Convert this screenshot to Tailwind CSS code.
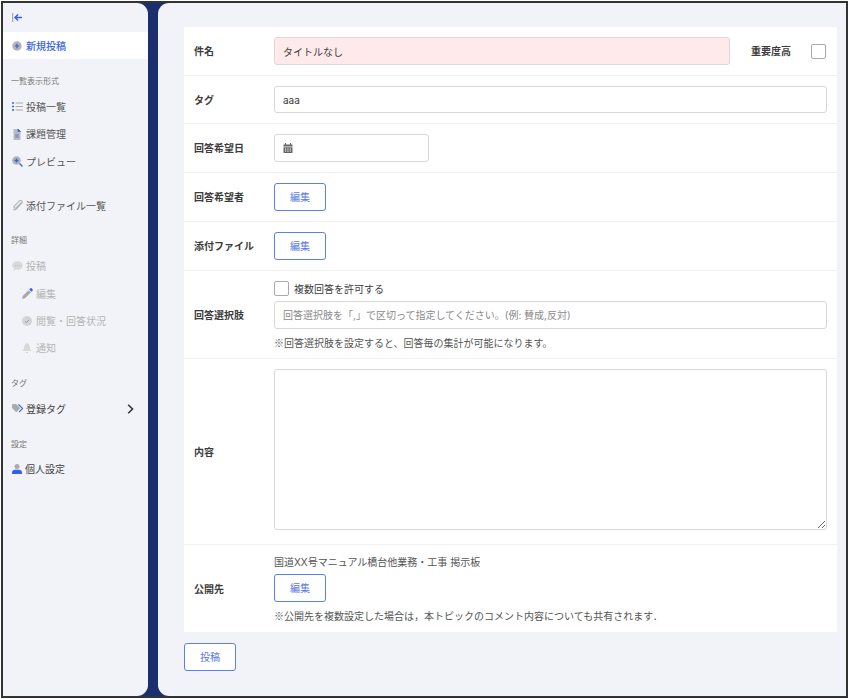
<!DOCTYPE html>
<html lang="ja">
<head>
  <meta charset="UTF-8" />
  <title>新規投稿</title>
  <script src="https://cdn.jsdelivr.net/npm/@tailwindcss/browser@4"></script>
</head>
<body class="bg-white font-['Inter','Noto_Sans_CJK_JP',sans-serif] text-[10px] leading-none text-[#3c3c3c]">
  <div class="w-[847px] h-[697px] m-px border-2 border-[#333] bg-[#1b2f6e] flex overflow-hidden">

    <!-- sidebar -->
    <aside class="w-[145px] h-full bg-[#f2f3f8] rounded-r-[11px] flex flex-col text-[#555]">
      <div class="h-[29px] pl-[9px] flex items-center">
        <svg width="11" height="9" viewBox="0 0 11 9" fill="none"><path d="M.7 0v9" stroke="#999" stroke-width="1"/><path d="M10 4.500H3.500M6 1.500 3 4.500l3 3" stroke="#2f62e8" stroke-width="1.500"/></svg>
      </div>
      <a class="h-[27px] bg-white flex items-center gap-[4px] pl-[9px] text-[#3a63e0] font-medium">
        <svg width="10" height="10" viewBox="0 0 11 11"><circle cx="5.500" cy="5.500" r="5.200" fill="#b4b4b4"/><path d="M5.500 3v5M3 5.500h5" stroke="#2f62e8" stroke-width="1.300"/></svg>
        新規投稿
      </a>

      <div class="mt-[16px] h-[12px] pl-[8px] flex items-center text-[8px] text-[#777]">一覧表示形式</div>
      <a class="mt-[6px] h-[27.500px] flex items-center gap-[3px] pl-[9px]">
        <svg width="11" height="9" viewBox="0 0 11 9"><path d="M0 1h2M0 4.500h2M0 8h2" stroke="#2f62e8" stroke-width="1.400"/><path d="M3.500 1H11M3.500 4.500H11M3.500 8H11" stroke="#aaa" stroke-width="1"/></svg>
        投稿一覧
      </a>
      <a class="h-[27.500px] flex items-center gap-[4px] pl-[9px]">
        <svg width="10" height="11" viewBox="1 0 9 11"><path d="M2 0h4.500L9 2.500V10.500a.5.500 0 0 1-.5.500h-6a.5.500 0 0 1-.5-.5z" fill="#bbb"/><path d="M6.500 0 9 2.500H6.500zM3.800 6h3.400M3.800 8h3.400" fill="#2f62e8" stroke="#2f62e8" stroke-width=".8"/></svg>
        課題管理
      </a>
      <a class="h-[27.500px] flex items-center gap-[3px] pl-[9px]">
        <svg width="11" height="11" viewBox="0 0 11 11"><circle cx="4.500" cy="4.500" r="4.300" fill="#b4b4b4"/><path d="M4.500 2.500v4M2.500 4.500h4M7.500 7.500 10.500 10.500" stroke="#2f62e8" stroke-width="1.300"/></svg>
        プレビュー
      </a>
      <a class="mt-[16px] h-[28px] flex items-center gap-[3px] pl-[9px]">
        <svg width="11" height="11" viewBox="0 0 11 11" fill="none"><path d="M9.500 2.300 4.300 7.600c-.7.700-1.500.7-2 .2s-.5-1.300.2-2L7 1.300c1.200-1.100 2.300-.9 2.800-.4s.6 1.500-.3 2.500L4.800 8.700c-1.500 1.500-3 1.500-3.700.7" stroke="#b4b4b4" stroke-width="1.100"/></svg>
        添付ファイル一覧
      </a>

      <div class="mt-[14.500px] h-[12px] pl-[8px] flex items-center text-[8px] text-[#777]">詳細</div>
      <a class="mt-[5.500px] h-[28px] flex items-center gap-[3px] pl-[9px] text-[#b5b5b5]">
        <svg width="11" height="10" viewBox="0 0 11 10"><ellipse cx="5.500" cy="4.500" rx="5.300" ry="4.200" fill="#d9d9d9"/><path d="M2 8 1 10l3-1.200z" fill="#d9d9d9"/><path d="M3 4.500h1M5 4.500h1M7 4.500h1" stroke="#a9bdf0" stroke-width="1"/></svg>
        投稿
      </a>
      <a class="h-[28px] flex items-center gap-[3px] pl-[19px] text-[#b5b5b5]">
        <svg width="11" height="11" viewBox="0 0 11 11"><path d="M0 11l.7-3L6.500 2.200 8.800 4.500 3 10.300z" fill="#a8a8a8"/><path d="M7.200 1.500 8.400.3c.3-.3.700-.3 1 0l1.300 1.300c.3.300.3.700 0 1L9.500 3.800z" fill="#2f62e8"/></svg>
        編集
      </a>
      <a class="h-[27.500px] flex items-center gap-[4px] pl-[19px] text-[#b5b5b5]">
        <svg width="10" height="10" viewBox="0 0 10 10" fill="none"><circle cx="5" cy="5" r="5" fill="#d4d4d4"/><path d="M3 5.200 4.500 6.600 7 3.800" stroke="#7f9ded" stroke-width="1"/></svg>
        閲覧・回答状況
      </a>
      <a class="h-[26.500px] flex items-center gap-[4px] pl-[19px] text-[#b5b5b5]">
        <svg width="10" height="11" viewBox="0 0 10 11"><path d="M5 0c.5 0 .8.300.8.800C7.300 1.200 8 2.500 8 4v2l1.500 2h-9L2 6V4c0-1.500.7-2.800 2.200-3.200C4.200.3 4.500 0 5 0z" fill="#d9d9d9"/><path d="M4 9.200h2a1 1 0 0 1-2 0z" fill="#a9bdf0"/></svg>
        通知
      </a>

      <div class="mt-[15px] h-[12px] pl-[8px] flex items-center text-[8px] text-[#777]">タグ</div>
      <a class="mt-[6px] h-[28px] flex items-center gap-[3px] pl-[9px] pr-[14px]">
        <svg width="11" height="9" viewBox="0 0 11 9" fill="none"><path d="M0 1a1 1 0 0 1 1-1h3l3.800 3.800c.3.300.3.700 0 1L4.200 8.300 0 4z" fill="#aaa"/><path d="M6.500.5 10.300 4.200c.2.200.2.400 0 .6L7 8.200" stroke="#2f62e8" stroke-width="1.100"/></svg>
        <span class="text-[#444]">登録タグ</span>
        <svg class="ml-auto" width="7" height="10" viewBox="0 0 7 10" fill="none"><path d="M1.200.8 5.500 5 1.200 9.200" stroke="#333" stroke-width="1.600"/></svg>
      </a>

      <div class="mt-[15px] h-[12px] pl-[8px] flex items-center text-[8px] text-[#777]">設定</div>
      <a class="mt-[5px] h-[28px] flex items-center gap-[3px] pl-[9px] text-[#444]">
        <svg width="10" height="10" viewBox="0 0 10 10"><circle cx="5" cy="2.500" r="2.500" fill="#aaa"/><path d="M0 10V8.500C0 6.800 1.300 5.700 3 5.700h4c1.700 0 3 1.100 3 2.800V10z" fill="#2f62e8"/></svg>
        個人設定
      </a>
    </aside>

    <!-- main -->
    <main class="ml-[10px] w-[688px] h-full bg-[#f2f3f8] rounded-l-[11px] pl-[26px] pr-[9px] pt-[24px]">
      <div class="w-[653px] bg-white divide-y divide-[#f1f1f1]">
        <div class="h-[49px] flex items-center px-[10px]">
          <label class="w-[80px] font-bold">件名</label>
          <input value="タイトルなし" class="w-[456px] h-[27.500px] bg-[#feeaea] border border-[#e0d8d8] rounded-[3px] px-[8px] outline-none" />
          <span class="ml-[21px] w-[40px] font-bold whitespace-nowrap">重要度高</span>
          <input type="checkbox" class="ml-[20px] appearance-none w-[15px] h-[15px] bg-white border border-[#aaa] rounded-[2px]" />
        </div>
        <div class="h-[48px] flex items-center px-[10px]">
          <label class="w-[80px] font-bold">タグ</label>
          <input value="aaa" class="flex-1 h-[27.500px] border border-[#d8d8d8] rounded-[3px] px-[8px] outline-none" />
        </div>
        <div class="h-[49px] flex items-center px-[10px]">
          <label class="w-[80px] font-bold">回答希望日</label>
          <div class="w-[155px] h-[27.500px] border border-[#d8d8d8] rounded-[3px] px-[8px] flex items-center">
            <svg width="10" height="10" viewBox="0 0 10 10" fill="#666"><path d="M2 0h1v1.500H2zM7 0h1v1.500H7zM.5 1.500h9V3.500h-9z"/><path d="M.5 4.300h9V10h-9zM2 5.500v1h1.300v-1zM4.300 5.500v1h1.300v-1zM6.700 5.500v1H8v-1zM2 7.500v1h1.300v-1zM4.300 7.500v1h1.300v-1zM6.700 7.500v1H8v-1z" fill-rule="evenodd"/></svg>
          </div>
        </div>
        <div class="h-[49px] flex items-center px-[10px]">
          <label class="w-[80px] font-bold">回答希望者</label>
          <button class="w-[52px] h-[27.500px] bg-white border border-[#5b7fec] rounded-[3px] text-[#5a78e6]">編集</button>
        </div>
        <div class="h-[49px] flex items-center px-[10px]">
          <label class="w-[80px] font-bold">添付ファイル</label>
          <button class="w-[52px] h-[27.500px] bg-white border border-[#5b7fec] rounded-[3px] text-[#5a78e6]">編集</button>
        </div>
        <div class="h-[88px] flex items-center px-[10px]">
          <label class="w-[80px] font-bold">回答選択肢</label>
          <div class="flex-1 flex flex-col">
            <div class="flex items-center gap-[5px]">
              <input type="checkbox" class="appearance-none w-[15px] h-[15px] bg-white border border-[#aaa] rounded-[2px]" />
              <span>複数回答を許可する</span>
            </div>
            <input placeholder="回答選択肢を「,」で区切って指定してください。(例: 賛成,反対)" class="mt-[5px] h-[27.500px] border border-[#d8d8d8] rounded-[3px] px-[8px] outline-none placeholder:text-[#8a8a8a]" />
            <p class="mt-[9px] text-[#555]"><span class="font-['Noto_Sans_CJK_JP',sans-serif]">※</span>回答選択肢を設定すると、回答毎の集計が可能になります。</p>
          </div>
        </div>
        <div class="h-[186px] flex items-center px-[10px]">
          <label class="w-[80px] font-bold">内容</label>
          <textarea class="flex-1 h-[161px] self-start mt-[10px] border border-[#d8d8d8] rounded-[3px] outline-none"></textarea>
        </div>
        <div class="h-[87px] flex items-center px-[10px]">
          <label class="w-[80px] font-bold">公開先</label>
          <div class="flex-1 flex flex-col items-start pt-[1px]">
            <p class="text-[#555]">国道XX号マニュアル橋台他業務・工事 掲示板</p>
            <button class="mt-[7px] w-[52px] h-[27.500px] bg-white border border-[#5b7fec] rounded-[3px] text-[#5a78e6]">編集</button>
            <p class="mt-[9px] text-[#555]"><span class="font-['Noto_Sans_CJK_JP',sans-serif]">※</span>公開先を複数設定した場合は，本トピックのコメント内容についても共有されます．</p>
          </div>
        </div>
      </div>
      <button class="mt-[11px] w-[52px] h-[27.500px] bg-white border border-[#5b7fec] rounded-[3px] text-[#5a78e6]">投稿</button>
    </main>
  </div>
</body>
</html>
